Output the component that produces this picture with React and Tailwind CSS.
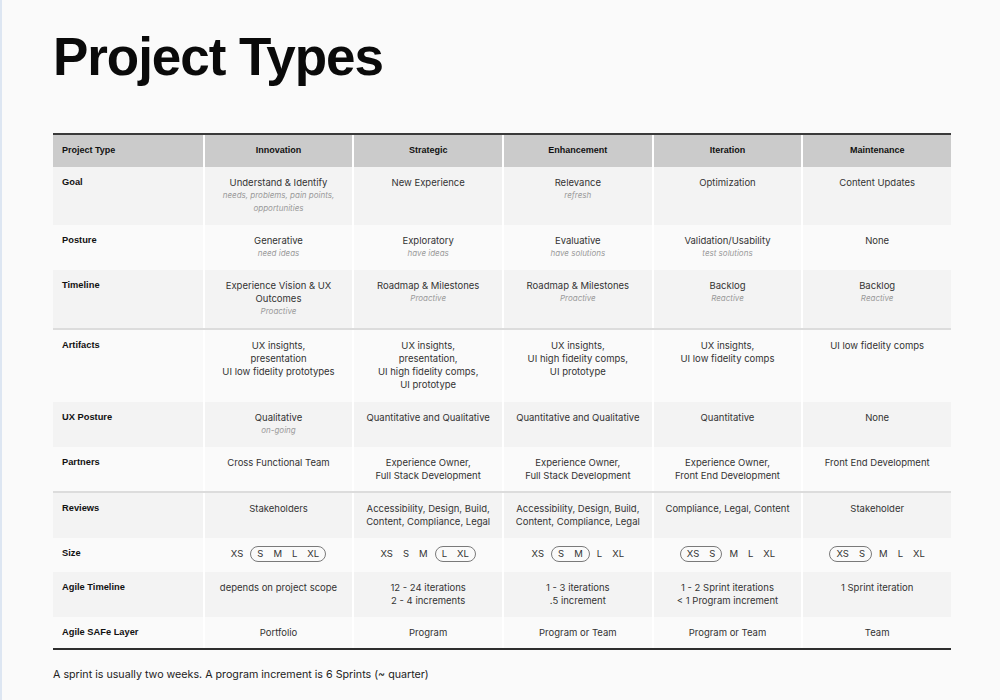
import React from 'react';

const HEAD = ['Project Type', 'Innovation', 'Strategic', 'Enhancement', 'Iteration', 'Maintenance'];

const ROWS = [
  {
    label: 'Goal',
    cls: 'bg-[#f3f3f3] h-[58px]',
    cells: [
      { t: ['Understand & Identify'], s: ['needs, problems, pain points,', 'opportunities'] },
      { t: ['New Experience'] },
      { t: ['Relevance'], s: ['refresh'] },
      { t: ['Optimization'] },
      { t: ['Content Updates'] },
    ],
  },
  {
    label: 'Posture',
    cls: 'bg-[#fafafa] h-[45px]',
    cells: [
      { t: ['Generative'], s: ['need ideas'] },
      { t: ['Exploratory'], s: ['have ideas'] },
      { t: ['Evaluative'], s: ['have solutions'] },
      { t: ['Validation/Usability'], s: ['test solutions'] },
      { t: ['None'] },
    ],
  },
  {
    label: 'Timeline',
    cls: 'bg-[#f3f3f3] h-[60px] border-b-2 border-[#dcdcdc]',
    cells: [
      { t: ['Experience Vision & UX', 'Outcomes'], s: ['Proactive'] },
      { t: ['Roadmap & Milestones'], s: ['Proactive'] },
      { t: ['Roadmap & Milestones'], s: ['Proactive'] },
      { t: ['Backlog'], s: ['Reactive'] },
      { t: ['Backlog'], s: ['Reactive'] },
    ],
  },
  {
    label: 'Artifacts',
    cls: 'bg-[#fafafa] h-[72px]',
    cells: [
      { t: ['UX insights,', 'presentation', 'UI low fidelity prototypes'] },
      { t: ['UX insights,', 'presentation,', 'UI high fidelity comps,', 'UI prototype'] },
      { t: ['UX insights,', 'UI high fidelity comps,', 'UI prototype'] },
      { t: ['UX insights,', 'UI low fidelity comps'] },
      { t: ['UI low fidelity comps'] },
    ],
  },
  {
    label: 'UX Posture',
    cls: 'bg-[#f3f3f3] h-[45px]',
    cells: [
      { t: ['Qualitative'], s: ['on-going'] },
      { t: ['Quantitative and Qualitative'] },
      { t: ['Quantitative and Qualitative'] },
      { t: ['Quantitative'] },
      { t: ['None'] },
    ],
  },
  {
    label: 'Partners',
    cls: 'bg-[#fafafa] h-[46px] border-b-2 border-[#dcdcdc]',
    cells: [
      { t: ['Cross Functional Team'] },
      { t: ['Experience Owner,', 'Full Stack Development'] },
      { t: ['Experience Owner,', 'Full Stack Development'] },
      { t: ['Experience Owner,', 'Front End Development'] },
      { t: ['Front End Development'] },
    ],
  },
  {
    label: 'Reviews',
    cls: 'bg-[#f3f3f3] h-[45px]',
    cells: [
      { t: ['Stakeholders'] },
      { t: ['Accessibility, Design, Build,', 'Content, Compliance, Legal'] },
      { t: ['Accessibility, Design, Build,', 'Content, Compliance, Legal'] },
      { t: ['Compliance, Legal, Content'] },
      { t: ['Stakeholder'] },
    ],
  },
  { label: 'Size', cls: 'bg-[#fafafa] h-[34px]', size: true },
  {
    label: 'Agile Timeline',
    cls: 'bg-[#f3f3f3] h-[45px]',
    cells: [
      { t: ['depends on project scope'] },
      { t: ['12 - 24 iterations', '2 - 4 increments'] },
      { t: ['1 - 3 iterations', '.5 increment'] },
      { t: ['1 - 2 Sprint iterations', '< 1 Program increment'] },
      { t: ['1 Sprint iteration'] },
    ],
  },
  {
    label: 'Agile SAFe Layer',
    cls: 'bg-[#fafafa] h-[31px]',
    cells: [
      { t: ['Portfolio'] },
      { t: ['Program'] },
      { t: ['Program or Team'] },
      { t: ['Program or Team'] },
      { t: ['Team'] },
    ],
  },
];

// groups in a pill are the sizes that fit the project type
const SIZES = [
  [{ p: false, v: ['XS'] }, { p: true, v: ['S', 'M', 'L', 'XL'] }],
  [{ p: false, v: ['XS', 'S', 'M'] }, { p: true, v: ['L', 'XL'] }],
  [{ p: false, v: ['XS'] }, { p: true, v: ['S', 'M'] }, { p: false, v: ['L', 'XL'] }],
  [{ p: true, v: ['XS', 'S'] }, { p: false, v: ['M', 'L', 'XL'] }],
  [{ p: true, v: ['XS', 'S'] }, { p: false, v: ['M', 'L', 'XL'] }],
];

const sans = "font-['Liberation_Sans',Arial,sans-serif]";
const body = "font-['Inter','Liberation_Sans',sans-serif]";

function SizeCell({ groups }) {
  return (
    <div className="flex items-center justify-center gap-[7px]">
      {groups.map((g, i) => (
        <div
          key={i}
          className={
            g.p
              ? 'flex items-center gap-[10px] h-[16px] px-[6px] rounded-full border border-[#7a7a7a]'
              : 'flex items-center gap-[10px]'
          }
        >
          {g.v.map((s) => (
            <span key={s}>{s}</span>
          ))}
        </div>
      ))}
    </div>
  );
}

function Row({ row }) {
  return (
    <div className={`grid grid-cols-6 ${row.cls}`}>
      <div className={`pl-[9px] pt-[9px] text-[9.3px] font-bold text-[#111] ${sans}`}>{row.label}</div>
      {row.size
        ? SIZES.map((g, i) => (
            <div key={i} className={`border-l-2 border-white pt-[8px] text-[9.5px] text-[#333] ${body}`}>
              <SizeCell groups={g} />
            </div>
          ))
        : row.cells.map((c, i) => (
            <div key={i} className={`border-l-2 border-white pt-[9px] text-center ${body}`}>
              {c.t.map((l) => (
                <div key={l} className="text-[9.5px] leading-[13px] text-[#333]">
                  {l}
                </div>
              ))}
              {c.s &&
                c.s.map((l) => (
                  <div key={l} className="text-[8px] leading-[13px] italic text-[#9a9a9a]">
                    {l}
                  </div>
                ))}
            </div>
          ))}
    </div>
  );
}

export default function App() {
  return (
    <div className="w-[1000px] h-[700px] bg-[#fafafa] border-l-2 border-[#dde6f2] pl-[51px] pt-[30px] overflow-hidden">
      <h1 className={`text-[53px] leading-[53px] font-bold tracking-[-0.02em] text-[#0a0a0a] ${sans}`}>
        Project Types
      </h1>
      <div className="w-[898px] mt-[50px] border-t-2 border-[#3a3a3a]">
        <div className={`grid grid-cols-6 h-[32px] bg-[#cbcbcb] text-[9px] font-bold text-[#111] ${sans}`}>
          {HEAD.map((h, i) => (
            <div
              key={h}
              className={i === 0 ? 'flex items-center pl-[9px]' : 'flex items-center justify-center border-l-2 border-white'}
            >
              {h}
            </div>
          ))}
        </div>
        {ROWS.map((r) => (
          <Row key={r.label} row={r} />
        ))}
        <div className="h-[2px] bg-[#2e2e2e]" />
      </div>
      <p className={`mt-[17px] text-[10.7px] text-[#222] ${body}`}>
        A sprint is usually two weeks. A program increment is 6 Sprints (~ quarter)
      </p>
    </div>
  );
}
